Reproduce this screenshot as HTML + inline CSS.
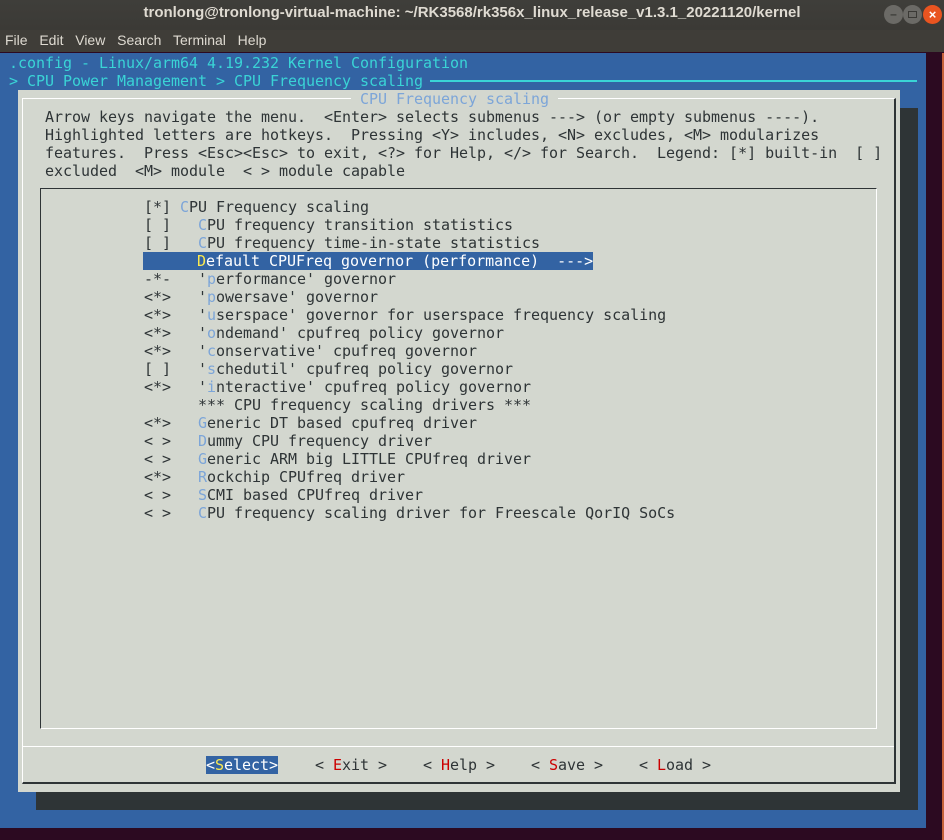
<!DOCTYPE html>
<html><head><meta charset="utf-8"><style>
*{margin:0;padding:0;box-sizing:border-box}
body{width:944px;height:840px;overflow:hidden;background:#2c0a21;position:relative;font-family:"DejaVu Sans Mono","Liberation Mono",monospace}
.a{position:absolute}
.r{position:absolute;white-space:pre;font-size:15px;line-height:18px;height:18px;color:#2e3436;letter-spacing:-0.03px}
.h{color:#7ca5d8}
.k{color:#cc0000}
.c{color:#3ad4d6}
</style></head><body>
<div class="a" style="left:0;top:0;width:944px;height:30px;background:linear-gradient(#3f3e3a,#3b3a36)"></div>
<div class="a" style="left:0;top:4px;width:944px;text-align:center;font:bold 15px 'Liberation Sans',sans-serif;color:#dfdbd2">tronlong@tronlong-virtual-machine: ~/RK3568/rk356x_linux_release_v1.3.1_20221120/kernel</div>
<div class="a" style="left:884px;top:5px;width:19px;height:19px;border-radius:50%;background:#6b6a66;color:#3a3935;font:bold 12px sans-serif;text-align:center;line-height:18px">–</div>
<div class="a" style="left:903px;top:5px;width:19px;height:19px;border-radius:50%;background:#6b6a66"><div class="a" style="left:5px;top:6px;width:9px;height:7px;border:1.5px solid #3a3935"></div></div>
<div class="a" style="left:923px;top:5px;width:19px;height:19px;border-radius:50%;background:#e95420;color:#fff;font:bold 13px sans-serif;text-align:center;line-height:19px">×</div>
<div class="a" style="left:0;top:30px;width:944px;height:22px;background:#3f3d38"></div>
<div class="a" style="left:5px;top:32px;font:14px 'Liberation Sans',sans-serif;color:#dfdbd2;word-spacing:2px">File&nbsp; Edit&nbsp; View&nbsp; Search&nbsp; Terminal&nbsp; Help</div>
<div class="a" style="left:0;top:52px;width:944px;height:1px;background:#2c0a21"></div>
<div class="a" style="left:0;top:53px;width:926px;height:775px;background:#3363a3"></div>
<div class="a" style="left:942px;top:53px;width:2px;height:787px;background:#c5623a"></div>
<div class="r c" style="left:0;top:54px"> .config - Linux/arm64 4.19.232 Kernel Configuration</div>
<div class="r c" style="left:0;top:72px"> &gt; CPU Power Management &gt; CPU Frequency scaling</div>
<div class="a" style="left:430px;top:80px;width:487px;height:2px;background:#3ad4d6"></div>
<div class="a" style="left:36px;top:108px;width:882px;height:702px;background:#2e3436"></div>
<div class="a" style="left:18px;top:90px;width:882px;height:702px;background:#d3d7cf"></div>
<div class="a" style="left:22px;top:98px;width:874px;height:686px;border-top:1px solid #fff;border-left:1px solid #fff;border-right:2px solid #2e3436;border-bottom:2px solid #2e3436"></div>
<div class="a" style="left:23px;top:746px;width:871px;height:1px;background:#fff"></div>
<div class="a" style="left:40px;top:188px;width:837px;height:541px;border-top:1px solid #2e3436;border-left:1px solid #2e3436;border-right:1px solid #fff;border-bottom:1px solid #fff"></div>
<div class="r" style="left:351px;top:90px;background:#d3d7cf;color:#7ca5d8"> CPU Frequency scaling </div>
<div class="r" style="left:0;top:108px">     Arrow keys navigate the menu.  &lt;Enter&gt; selects submenus ---&gt; (or empty submenus ----).</div>
<div class="r" style="left:0;top:126px">     Highlighted letters are hotkeys.  Pressing &lt;Y&gt; includes, &lt;N&gt; excludes, &lt;M&gt; modularizes</div>
<div class="r" style="left:0;top:144px">     features.  Press &lt;Esc&gt;&lt;Esc&gt; to exit, &lt;?&gt; for Help, &lt;/&gt; for Search.  Legend: [*] built-in  [ ]</div>
<div class="r" style="left:0;top:162px">     excluded  &lt;M&gt; module  &lt; &gt; module capable</div>
<div class="r" style="left:144px;top:198px">[*] <span class="h">C</span>PU Frequency scaling</div>
<div class="r" style="left:144px;top:216px">[ ]   <span class="h">C</span>PU frequency transition statistics</div>
<div class="r" style="left:144px;top:234px">[ ]   <span class="h">C</span>PU frequency time-in-state statistics</div>
<div class="r" style="left:143px;top:252px;background:#3363a3;color:#fff;width:450px"> <span style="padding-left:0">     </span><span style="color:#fce94f">D</span>efault CPUFreq governor (performance)  ---&gt;</div>
<div class="r" style="left:144px;top:270px">-*-   '<span class="h">p</span>erformance' governor</div>
<div class="r" style="left:144px;top:288px">&lt;*&gt;   '<span class="h">p</span>owersave' governor</div>
<div class="r" style="left:144px;top:306px">&lt;*&gt;   '<span class="h">u</span>serspace' governor for userspace frequency scaling</div>
<div class="r" style="left:144px;top:324px">&lt;*&gt;   '<span class="h">o</span>ndemand' cpufreq policy governor</div>
<div class="r" style="left:144px;top:342px">&lt;*&gt;   '<span class="h">c</span>onservative' cpufreq governor</div>
<div class="r" style="left:144px;top:360px">[ ]   '<span class="h">s</span>chedutil' cpufreq policy governor</div>
<div class="r" style="left:144px;top:378px">&lt;*&gt;   '<span class="h">i</span>nteractive' cpufreq policy governor</div>
<div class="r" style="left:144px;top:396px">      *** CPU frequency scaling drivers ***</div>
<div class="r" style="left:144px;top:414px">&lt;*&gt;   <span class="h">G</span>eneric DT based cpufreq driver</div>
<div class="r" style="left:144px;top:432px">&lt; &gt;   <span class="h">D</span>ummy CPU frequency driver</div>
<div class="r" style="left:144px;top:450px">&lt; &gt;   <span class="h">G</span>eneric ARM big LITTLE CPUfreq driver</div>
<div class="r" style="left:144px;top:468px">&lt;*&gt;   <span class="h">R</span>ockchip CPUfreq driver</div>
<div class="r" style="left:144px;top:486px">&lt; &gt;   <span class="h">S</span>CMI based CPUfreq driver</div>
<div class="r" style="left:144px;top:504px">&lt; &gt;   <span class="h">C</span>PU frequency scaling driver for Freescale QorIQ SoCs</div>
<div class="r" style="left:206px;top:756px;background:#3363a3;color:#fff;width:72px">&lt;<span style="color:#fce94f">S</span>elect&gt;</div>
<div class="r" style="left:315px;top:756px">&lt; <span class="k">E</span>xit &gt;</div>
<div class="r" style="left:423px;top:756px">&lt; <span class="k">H</span>elp &gt;</div>
<div class="r" style="left:531px;top:756px">&lt; <span class="k">S</span>ave &gt;</div>
<div class="r" style="left:639px;top:756px">&lt; <span class="k">L</span>oad &gt;</div>
</body></html>
